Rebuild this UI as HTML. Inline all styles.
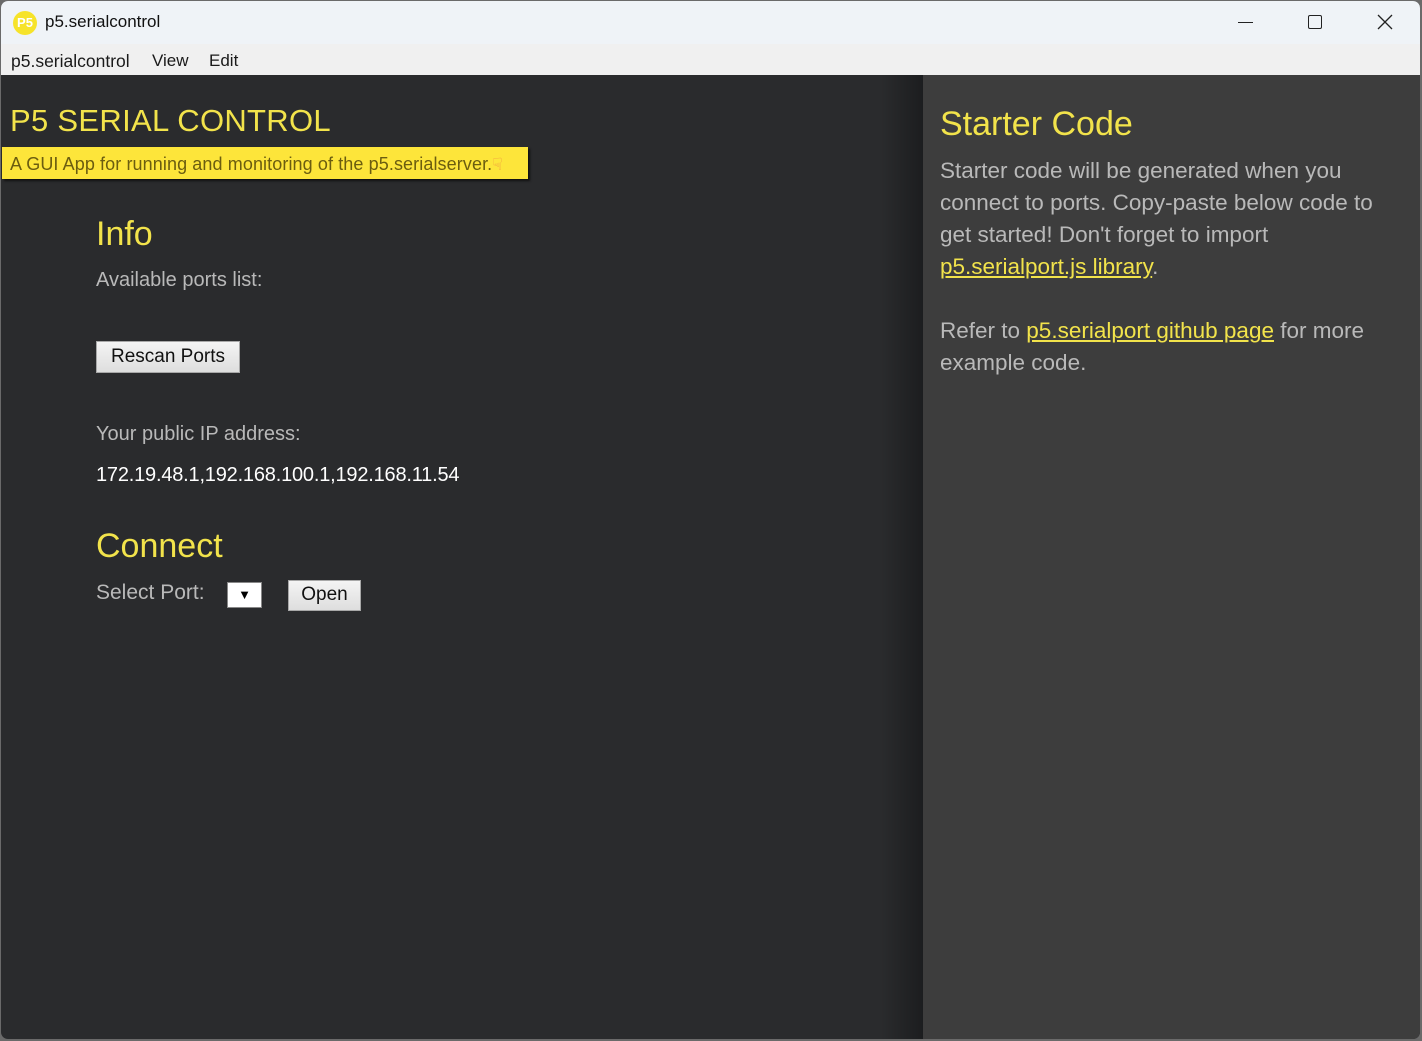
<!DOCTYPE html>
<html><head><meta charset="utf-8"><style>
*{margin:0;padding:0;box-sizing:border-box}
body{width:1422px;height:1041px;background:#6a6a6a;font-family:"Liberation Sans",sans-serif;position:relative;overflow:hidden}
.win{position:absolute;left:1px;top:1px;width:1419px;height:1038px;background:#2a2b2d;border-radius:7px 7px 7px 7px;overflow:hidden}
.title{position:absolute;left:0;top:0;width:100%;height:43px;background:#eff3f7}
.menu{position:absolute;left:0;top:43px;width:100%;height:31px;background:#f0f0f0;font-size:17px;color:#1a1a1a}
.a{position:absolute;white-space:nowrap}
.right{position:absolute;left:922px;top:74px;width:497px;height:964px;background:#3d3d3d}
.shadow{position:absolute;left:880px;top:74px;width:42px;height:964px;background:linear-gradient(90deg,#2a2b2d,#1c1d1f)}
.y{color:#f2e34b}
.g{color:#b9b9b9}
.btn{position:absolute;background:linear-gradient(#f4f4f4,#dedede);border:1px solid #a8a8a8;color:#111;font-size:19px;text-align:center}
a{color:#f2e34b;text-decoration:underline}
</style></head><body>
<div class="win">
<div class="title">
 <div class="a" style="left:12px;top:10px;width:24px;height:24px;border-radius:50%;background:#f6e32a;color:#fff;font-size:13px;font-weight:bold;text-align:center;line-height:24px">P5</div>
 <div class="a" style="left:44px;top:11px;font-size:17px;color:#111">p5.serialcontrol</div>
 <div class="a" style="left:1237px;top:21px;width:15px;height:1px;background:#222"></div>
 <div class="a" style="left:1307px;top:14px;width:14px;height:14px;border:1.2px solid #222;border-radius:2px"></div>
 <svg class="a" style="left:1376px;top:13px" width="16" height="16"><path d="M1 1L15 15M15 1L1 15" stroke="#222" stroke-width="1.3"/></svg>
</div>
<div class="menu">
 <div class="a" style="left:10px;top:7px;font-size:17.5px">p5.serialcontrol</div>
 <div class="a" style="left:151px;top:7px">View</div>
 <div class="a" style="left:208px;top:7px">Edit</div>
</div>
<div class="shadow"></div>
<div class="a y" style="left:9px;top:102px;font-size:31px;letter-spacing:0.3px">P5 SERIAL CONTROL</div>
<div class="a" style="left:1px;top:146px;width:526px;height:32px;background:#fde53a;box-shadow:2px 2px 2px #111"></div>
<div class="a" style="left:9px;top:153px;font-size:18px;color:#6b5d10;letter-spacing:0.1px">A GUI App for running and monitoring of the p5.serialserver.<span style="color:#f0a040;font-size:17px">&#9759;</span></div>
<div class="a y" style="left:95px;top:214px;font-size:34px">Info</div>
<div class="a g" style="left:95px;top:268px;font-size:20px">Available ports list:</div>
<div class="btn" style="left:95px;top:340px;width:144px;height:32px;line-height:29px">Rescan Ports</div>
<div class="a g" style="left:95px;top:422px;font-size:20px">Your public IP address:</div>
<div class="a" style="left:95px;top:463px;font-size:20px;color:#fff;letter-spacing:-0.2px">172.19.48.1,192.168.100.1,192.168.11.54</div>
<div class="a y" style="left:95px;top:526px;font-size:34px">Connect</div>
<div class="a g" style="left:95px;top:580px;font-size:21px">Select Port:</div>
<div class="a" style="left:226px;top:581px;width:35px;height:26px;background:#fff;border:1px solid #888;font-size:13px;text-align:center;line-height:24px;color:#000">&#9660;</div>
<div class="btn" style="left:287px;top:579px;width:73px;height:31px;line-height:28px">Open</div>
<div class="right">
 <div class="a y" style="left:17px;top:30px;font-size:34px">Starter Code</div>
 <div class="a g" style="left:17px;top:80px;font-size:22.5px;line-height:32px">Starter code will be generated when you<br>connect to ports. Copy-paste below code to<br>get started! Don't forget to import<br><a>p5.serialport.js library</a>.<br><br>Refer to <a>p5.serialport github page</a> for more<br>example code.</div>
</div>
</div>
</body></html>
